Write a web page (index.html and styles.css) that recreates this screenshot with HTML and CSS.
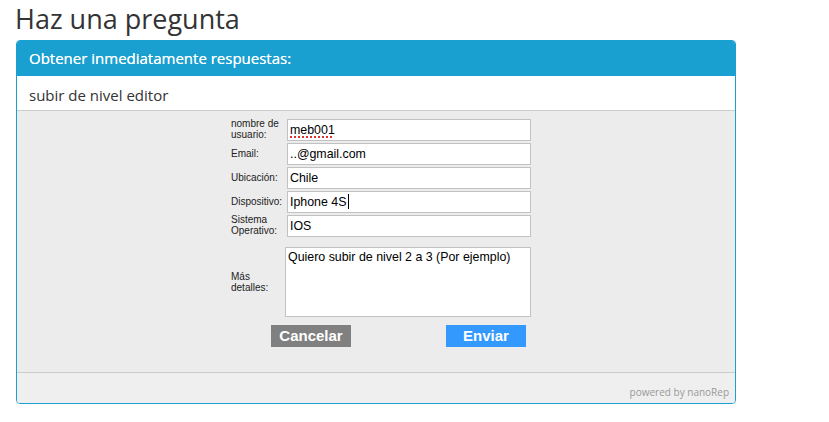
FILE: index.html
```html
<!DOCTYPE html>
<html lang="es">
<head>
<meta charset="UTF-8">
<meta name="viewport" content="width=device-width, initial-scale=1.0">
<title>Haz una pregunta</title>
<link rel="stylesheet" href="styles.css">
</head>
<body>
<h1 class="page-title">Haz una pregunta</h1>

<div class="ask-box">
    <div class="ask-head">Obtener inmediatamente respuestas:</div>
    <div class="ask-subject">subir de nivel editor</div>

    <div class="ask-form">
        <div class="form-grid">
            <label class="field-label">nombre de usuario:</label>
            <div class="field"><span class="misspelled">meb001</span></div>

            <label class="field-label">Email:</label>
            <div class="field">..@gmail.com</div>

            <label class="field-label">Ubicación:</label>
            <div class="field">Chile</div>

            <label class="field-label">Dispositivo:</label>
            <div class="field">Iphone 4S<span class="caret"></span></div>

            <label class="field-label">Sistema Operativo:</label>
            <div class="field">IOS</div>

            <label class="field-label details-label">Más detalles:</label>
            <div class="field details-field">Quiero subir de nivel 2 a 3 (Por ejemplo)</div>
        </div>

        <div class="form-buttons">
            <button class="btn btn-cancel">Cancelar</button>
            <button class="btn btn-send">Enviar</button>
        </div>
    </div>

    <div class="ask-foot">powered by nanoRep</div>
</div>
</body>
</html>
```

FILE: styles.css
```css
body {
    margin: 0;
    padding: 0;
    font-family: "Open Sans", Arial, sans-serif;
    background: #fff;
}

.page-title {
    margin: 2px 0 5px 15px;
    font-size: 27px;
    line-height: 33px;
    font-weight: normal;
    color: #333;
}

.ask-box {
    width: 720px;
    margin-left: 16px;
    box-sizing: border-box;
    border: 1px solid #1a9fd0;
    border-radius: 4px;
    overflow: hidden;
}

.ask-head {
    height: 35px;
    margin-top: -1px; /* header covers the top border */
    padding: 1px 0 0 12px;
    background-color: #1aa0d0;
    color: #fff;
    font-size: 15px;
    line-height: 35px;
    text-shadow: 0 0 0.4px #fff;
}

.ask-subject {
    height: 34px;
    padding-left: 12px;
    border-bottom: 1px solid #ccc;
    background: #fff;
    color: #333;
    font-size: 15px;
    line-height: 38px;
}

.ask-form {
    height: 253px;
    padding-top: 8px;
    border-bottom: 1px solid #ccc;
    background-color: #ececec;
}

.form-grid {
    display: grid;
    grid-template-columns: 56px 244px;
    row-gap: 2px;
    margin-left: 214px;
    width: 300px;
}

.field-label {
    display: flex;
    align-items: center;
    height: 22px;
    margin-top: -1px;
    font-family: "Liberation Sans", Arial, sans-serif;
    font-size: 10px;
    line-height: 11px;
    color: #222;
}

.field {
    height: 22px;
    box-sizing: border-box;
    padding: 0 2px;
    border: 1px solid #c2c2c2;
    background: #fff;
    font-family: "Liberation Sans", Arial, sans-serif;
    font-size: 12.4px;
    line-height: 21px;
    color: #000;
    white-space: nowrap;
}

.misspelled {
    text-decoration: underline dotted #e0322f;
    text-decoration-thickness: 2px;
    text-underline-offset: 2px;
}

.caret {
    display: inline-block;
    width: 1px;
    height: 15px;
    margin-left: 1px;
    vertical-align: -3px;
    background: #000;
}

.details-label {
    height: 70px;
    margin-top: 8px;
}

.details-field {
    height: 70px;
    width: 246px;
    margin-top: 8px;
    margin-left: -2px;
    padding: 1px 2px;
    line-height: 17px;
}

.form-buttons {
    display: flex;
    gap: 95px;
    margin: 8px 0 0 254px;
}

.btn {
    width: 80px;
    height: 22px;
    padding: 0;
    border: none;
    color: #fff;
    font-family: "Liberation Sans", Arial, sans-serif;
    font-size: 15px;
    font-weight: bold;
    line-height: 22px;
    cursor: pointer;
}

.btn-cancel {
    background-color: #808080;
}

.btn-send {
    background-color: #3399ff;
}

.ask-foot {
    height: 30px;
    padding-right: 6px;
    background-color: #efefef;
    color: #999;
    font-size: 10px;
    line-height: 38px;
    text-align: right;
}
```
